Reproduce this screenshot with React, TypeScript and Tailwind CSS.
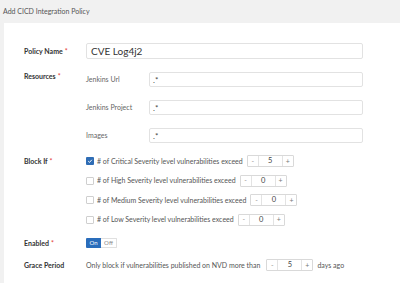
import React from "react";

function Stepper({ value, className = "" }: { value: string; className?: string }) {
  return (
    <div className={`flex h-[12px] border border-[#d9d9d9] rounded-[1px] text-[7px] leading-none ${className}`}>
      <div className="w-[11px] flex items-center justify-center text-[#999] border-r border-[#e3e3e3]">-</div>
      <div className="w-[23px] flex items-center justify-center text-[#444] text-[7.5px]">{value}</div>
      <div className="w-[11px] flex items-center justify-center text-[#777] border-l border-[#e3e3e3]">+</div>
    </div>
  );
}

function Check({ checked }: { checked?: boolean }) {
  return checked ? (
    <div className="w-[8px] h-[8px] rounded-[1px] bg-[#2f6db5] flex items-center justify-center">
      <svg width="6" height="6" viewBox="0 0 10 10">
        <path d="M2 5.2 L4.2 7.3 L8 3" fill="none" stroke="white" strokeWidth="1.6" />
      </svg>
    </div>
  ) : (
    <div className="w-[8px] h-[8px] rounded-[1px] border border-[#cfcfcf] bg-white" />
  );
}

function Req() {
  return <span className="text-[#e53935] ml-[2px] font-normal">*</span>;
}

export default function App() {
  const rows = [
    { t: "Critical", v: "5", c: true },
    { t: "High", v: "0" },
    { t: "Medium", v: "0" },
    { t: "Low", v: "0" },
  ];
  return (
    <div className="w-[400px] h-[283px] bg-[#f1f1f1] flex flex-col overflow-hidden" style={{ fontFamily: "Lato, 'Open Sans', sans-serif" }}>
      <div className="h-[23px] pl-[3px] flex items-center text-[7px] text-[#555]">Add CICD Integration Policy</div>
      <div className="flex-1 ml-[4px] bg-white pl-[20px] pt-[20px] flex flex-col">
        {/* Policy name */}
        <div className="flex items-center h-[16px]">
          <div className="w-[62px] text-[7px] font-bold text-[#333]">Policy Name<Req /></div>
          <div className="w-[277px] h-[16px] border border-[#e2e2e2] rounded-[2px] flex items-center pl-[4px] text-[10px] text-[#333]">CVE Log4j2</div>
        </div>
        {/* Resources */}
        <div className="flex mt-[13px]">
          <div className="w-[62px] text-[7px] font-bold text-[#333] leading-none pt-[1px]">Resources<Req /></div>
          <div className="flex flex-col gap-[13px]">
            {["Jenkins Url", "Jenkins Project", "Images"].map((l) => (
              <div key={l} className="flex items-center h-[15px]">
                <div className="w-[63px] text-[7px] text-[#666]">{l}</div>
                <div className="w-[214px] h-[15px] border border-[#e2e2e2] rounded-[2px] flex items-center pl-[3px] text-[8px] text-[#444]">.*</div>
              </div>
            ))}
          </div>
        </div>
        {/* Block if */}
        <div className="flex mt-[12px]">
          <div className="w-[62px] text-[7px] font-bold text-[#333] h-[12px] flex items-center">Block If<Req /></div>
          <div className="flex flex-col gap-[7.5px]">
            {rows.map((r) => (
              <div key={r.t} className="flex items-center h-[12px] text-[7px] text-[#555]">
                <Check checked={r.c} />
                <span className="ml-[3px]"># of {r.t} Severity level vulnerabilities exceed</span>
                <Stepper value={r.v} className="ml-[4px]" />
              </div>
            ))}
          </div>
        </div>
        {/* Enabled */}
        <div className="flex items-center mt-[12.5px] h-[10px]">
          <div className="w-[62px] text-[7px] font-bold text-[#333]">Enabled<Req /></div>
          <div className="flex h-[10px] text-[6px] leading-none">
            <div className="w-[15px] bg-[#2a6dbb] text-white flex items-center justify-center rounded-l-[1px]">On</div>
            <div className="w-[16px] border border-l-0 border-[#e0e0e0] text-[#888] flex items-center justify-center rounded-r-[1px]">Off</div>
          </div>
        </div>
        {/* Grace */}
        <div className="flex items-center mt-[11px] h-[12px]">
          <div className="w-[62px] text-[7px] font-bold text-[#333]">Grace Period</div>
          <span className="text-[7px] text-[#555]">Only block if vulnerabilities published on NVD more than</span>
          <Stepper value="5" className="ml-[6px]" />
          <span className="ml-[4px] text-[7px] text-[#555]">days ago</span>
        </div>
      </div>
    </div>
  );
}
